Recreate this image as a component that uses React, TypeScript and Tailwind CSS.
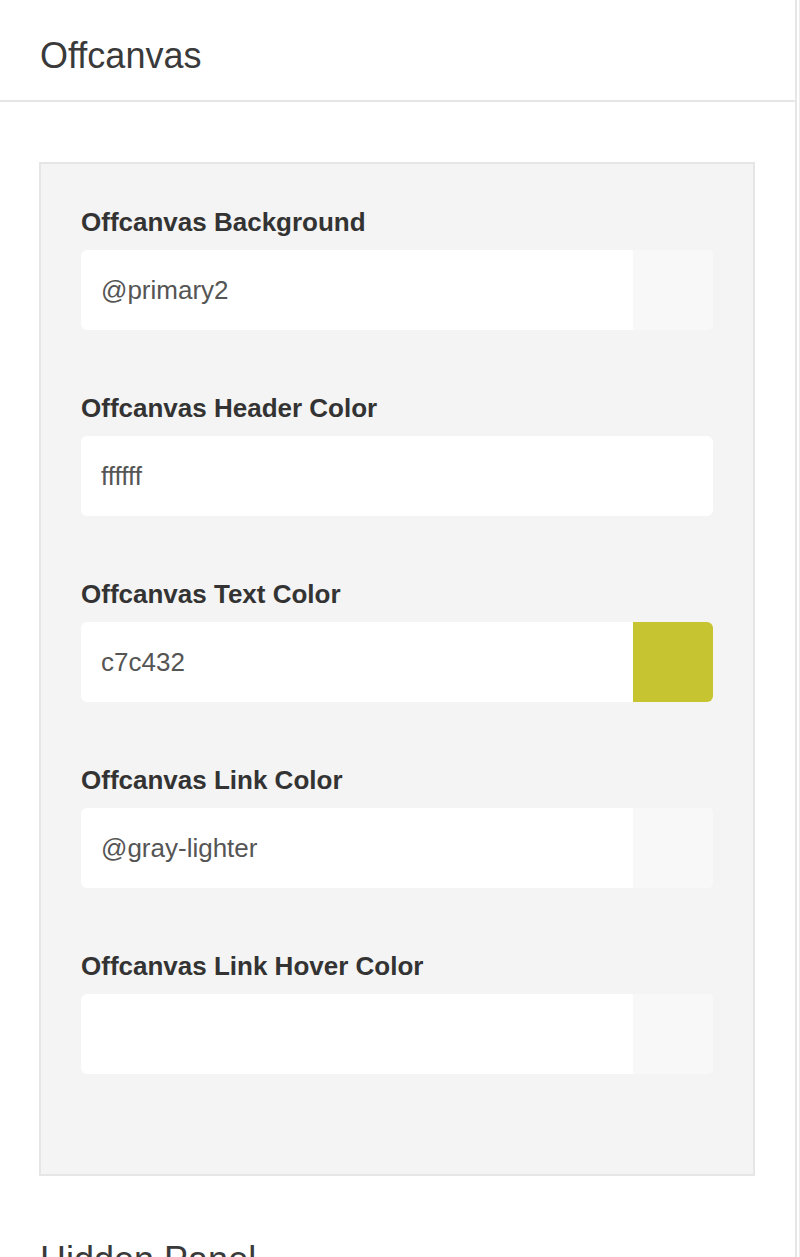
import React from "react";

const fields: { label: string; value: string; swatch: string | null }[] = [
  { label: "Offcanvas Background", value: "@primary2", swatch: "#f8f8f8" },
  { label: "Offcanvas Header Color", value: "ffffff", swatch: null },
  { label: "Offcanvas Text Color", value: "c7c432", swatch: "#c7c432" },
  { label: "Offcanvas Link Color", value: "@gray-lighter", swatch: "#f8f8f8" },
  { label: "Offcanvas Link Hover Color", value: "", swatch: "#f8f8f8" },
];

export default function App() {
  return (
    <div
      className="flex w-[800px] h-[1257px] overflow-hidden bg-white"
      style={{ fontFamily: '"Liberation Sans", Arial, sans-serif' }}
    >
      <div className="w-[797px] shrink-0 border-r-2 border-[#e6e6e6]">
        <div className="h-[102px] border-b-2 border-[#e6e6e6] pt-[36px] pl-[40px]">
          <h2 className="text-[36px] leading-[40px] text-[#3a3a3a] font-normal">Offcanvas</h2>
        </div>
        <div className="pt-[60px] pb-[28px] pl-[39px] pr-[40px]">
          <div className="border-2 border-[#e6e6e6] bg-[#f4f4f4] px-[40px] pt-[43px] pb-[37px]">
            {fields.map((f) => (
              <div key={f.label} className="mb-[63px]">
                <div className="text-[26px] leading-[30px] font-bold text-[#333333]">{f.label}</div>
                <div className="mt-[13px] flex h-[80px] rounded-[6px] overflow-hidden bg-white">
                  <div className="flex-1 flex items-center pl-[20px] text-[26px] text-[#555555]">
                    {f.value}
                  </div>
                  {f.swatch && (
                    <div className="w-[80px] h-full" style={{ backgroundColor: f.swatch }} />
                  )}
                </div>
              </div>
            ))}
          </div>
        </div>
        <div className="pt-[36px] pl-[40px]">
          <h2 className="text-[36px] leading-[40px] text-[#3a3a3a] font-normal">Hidden Panel</h2>
        </div>
      </div>
      <div className="flex-1 bg-white flex justify-end">
        <div className="w-[1px] h-full bg-[#ececec]" />
      </div>
    </div>
  );
}
